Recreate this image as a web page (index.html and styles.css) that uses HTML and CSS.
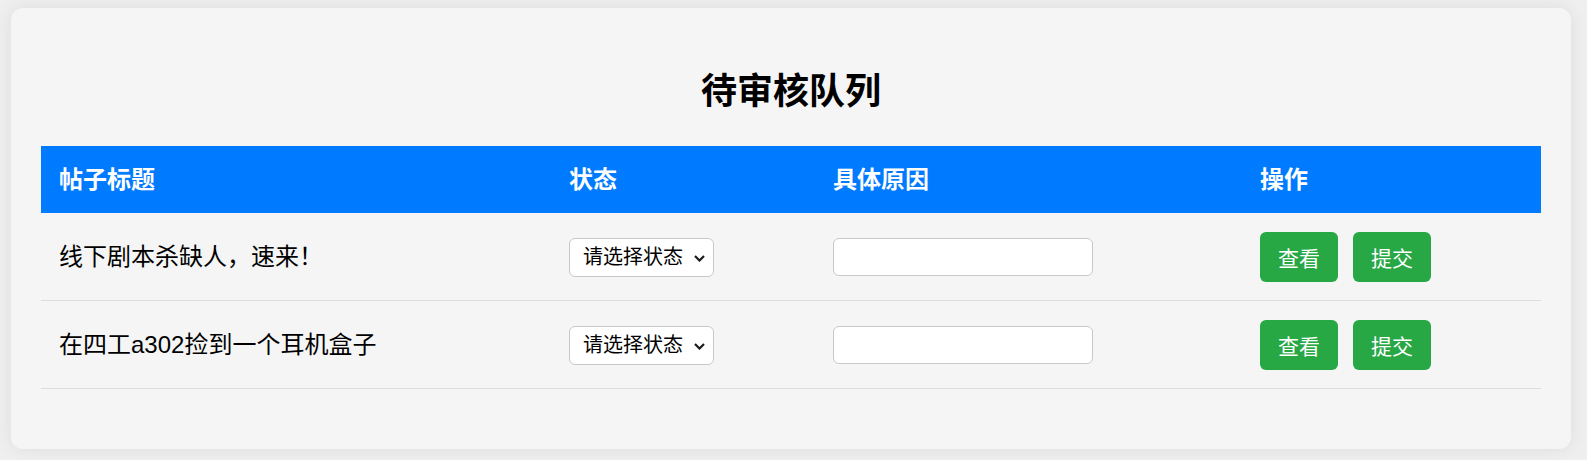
FILE: index.html
```html
<!DOCTYPE html>
<html lang="zh-CN">
<head>
<meta charset="utf-8">
<title>待审核队列</title>
<link rel="stylesheet" href="styles.css">
</head>
<body>
<div class="card">
  <h2 class="title">待审核队列</h2>
  <table class="queue">
    <colgroup>
      <col class="c-title">
      <col class="c-status">
      <col class="c-reason">
      <col class="c-action">
    </colgroup>
    <thead>
      <tr>
        <th>帖子标题</th>
        <th>状态</th>
        <th>具体原因</th>
        <th>操作</th>
      </tr>
    </thead>
    <tbody>
      <tr>
        <td>线下剧本杀缺人，速来！</td>
        <td>
          <div class="select-wrap">
            <select class="status"><option>请选择状态</option><option>通过</option><option>拒绝</option></select>
            <svg class="chev" width="11" height="7" viewBox="0 0 11 7"><path d="M1 1 L5.5 5.5 L10 1" fill="none" stroke="#1a1a1a" stroke-width="2.2"/></svg>
          </div>
        </td>
        <td><input class="reason" type="text"></td>
        <td><div class="actions"><button class="btn">查看</button><button class="btn">提交</button></div></td>
      </tr>
      <tr>
        <td>在四工a302捡到一个耳机盒子</td>
        <td>
          <div class="select-wrap">
            <select class="status"><option>请选择状态</option><option>通过</option><option>拒绝</option></select>
            <svg class="chev" width="11" height="7" viewBox="0 0 11 7"><path d="M1 1 L5.5 5.5 L10 1" fill="none" stroke="#1a1a1a" stroke-width="2.2"/></svg>
          </div>
        </td>
        <td><input class="reason" type="text"></td>
        <td><div class="actions"><button class="btn">查看</button><button class="btn">提交</button></div></td>
      </tr>
    </tbody>
  </table>
</div>
</body>
</html>
```

FILE: styles.css
```css
html, body {
  margin: 0;
  padding: 0;
}
body {
  background: #efefef;
  font-family: "Liberation Sans", "Noto Sans CJK SC", sans-serif;
  color: #000;
  padding: 8px 16px 11px 11px;
}
.card {
  background: #f5f5f5;
  border-radius: 12px;
  box-shadow: 0 0 18px rgba(0, 0, 0, 0.08);
  padding: 30px;
  height: 381px;
}
.title {
  margin: 30px 0;
  text-align: center;
  font-size: 36px;
  line-height: 48px;
  font-weight: bold;
}
.queue {
  width: 1500px;
  border-collapse: collapse;
  table-layout: fixed;
}
.c-title { width: 510px; }
.c-status { width: 264px; }
.c-reason { width: 427px; }
.c-action { width: 299px; }
.queue th {
  background: #007bff;
  color: #fff;
  font-size: 24px;
  font-weight: bold;
  text-align: left;
  padding: 18px;
  line-height: 31px;
}
.queue td {
  font-size: 24px;
  line-height: 30px;
  padding: 19px 18px 18px;
  border-bottom: 1px solid #dddddd;
  vertical-align: middle;
}
.select-wrap {
  position: relative;
  width: 145px;
}
.status {
  -webkit-appearance: none;
  appearance: none;
  width: 145px;
  height: 39px;
  font-family: "Liberation Sans", "Noto Sans CJK SC", sans-serif;
  font-size: 20px;
  color: #000;
  background: #fff;
  border: 1px solid #c8c8c8;
  border-radius: 6px;
  padding: 0 24px 0 13px;
  display: block;
}
.chev {
  position: absolute;
  right: 9px;
  top: 17px;
  pointer-events: none;
}
.reason {
  display: block;
  width: 260px;
  height: 38px;
  box-sizing: border-box;
  background: #fff;
  border: 1px solid #c8c8c8;
  border-radius: 6px;
  font-size: 20px;
  padding: 0 8px;
}
.actions {
  display: flex;
  gap: 15px;
}
.btn {
  width: 78px;
  height: 50px;
  background: #28a745;
  color: #fff;
  border: none;
  border-radius: 6px;
  font-family: "Liberation Sans", "Noto Sans CJK SC", sans-serif;
  font-size: 21px;
  padding: 0;
  cursor: pointer;
}
```
